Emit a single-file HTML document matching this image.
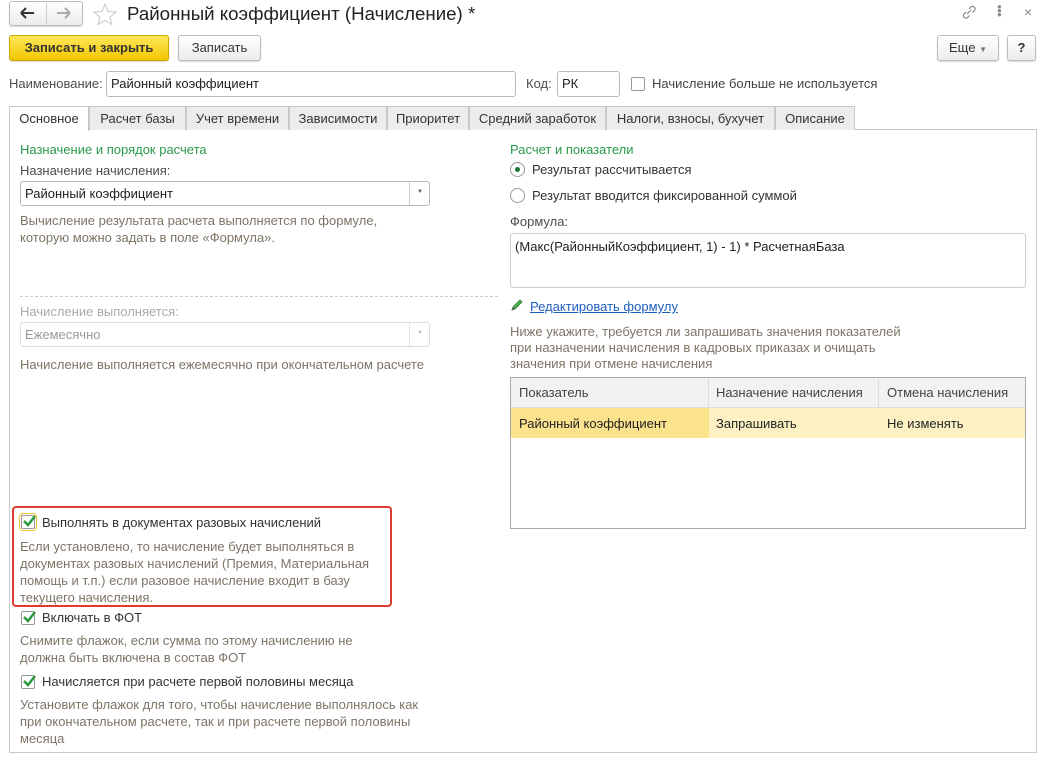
<!DOCTYPE html>
<html><head><meta charset="utf-8"><style>
*{box-sizing:border-box}
body{margin:0;width:1053px;height:759px;background:#fff;font-family:"Liberation Sans",Arial,sans-serif;font-size:13px;color:#333;position:relative;overflow:hidden}
.a{position:absolute;white-space:nowrap}
.btn{position:absolute;border:1px solid #bbb;border-radius:3px;background:linear-gradient(#fff,#ececec);box-shadow:0 1px 1px rgba(0,0,0,.15);text-align:center;color:#333}
.inp{position:absolute;border:1px solid #b8b8b8;border-radius:3px;background:#fff;padding-left:4px}
.tab{position:absolute;top:106px;height:24px;border:1px solid #c8c8c8;border-bottom:none;background:#ececec;text-align:center;line-height:23px;color:#333}
.hint{color:#7d7466}
.green{color:#2a9a4a}
.cb{position:absolute;width:14px;height:14px;border:1px solid #999;border-radius:2px;background:#fff}
.cb svg{position:absolute;left:0;top:-2px}
</style></head><body>
<div class="btn" style="left:9px;top:1px;width:74px;height:25px;border-radius:3px"></div>
<div class="a" style="left:46px;top:3px;width:1px;height:21px;background:#ccc"></div>
<svg class="a" style="left:20px;top:7px" width="16" height="12"><path d="M1 6H14M1 6L6 1M1 6L6 11" stroke="#333" stroke-width="2" fill="none"/></svg>
<svg class="a" style="left:56px;top:7px" width="16" height="12"><path d="M1 6H14M14 6L9 1M14 6L9 11" stroke="#aaa" stroke-width="2" fill="none"/></svg>
<svg class="a" style="left:93px;top:3px" width="24" height="22"><path d="M12 1L15 8.5L23 9L17 14L19 21.5L12 17.5L5 21.5L7 14L1 9L9 8.5Z" fill="none" stroke="#c8c8c8" stroke-width="1"/></svg>
<div class="a" style="left:127px;top:3px;font-size:18.7px;color:#222">Районный коэффициент (Начисление) *</div>
<svg class="a" style="left:961px;top:4px" width="16" height="16"><path d="M6 10L10 6M5 8L3 10a2.5 2.5 0 0 0 3.5 3.5L8.5 11.5M8 5L10 3a2.5 2.5 0 0 1 3.5 3.5L11.5 8.5" stroke="#888" stroke-width="1.2" fill="none"/></svg>
<div class="a" style="left:997px;top:5px;width:3px;line-height:4px;color:#888;font-size:8px">●<br>●<br>●</div>
<div class="a" style="left:1024px;top:4px;color:#888;font-size:14px">×</div>
<div class="btn" style="left:9px;top:35px;width:160px;height:26px;background:linear-gradient(#ffe75a,#f2c600);border-color:#c9a800;font-weight:bold;line-height:24px">Записать и закрыть</div>
<div class="btn" style="left:178px;top:35px;width:83px;height:26px;line-height:24px">Записать</div>
<div class="btn" style="left:937px;top:35px;width:62px;height:26px;line-height:24px">Еще <span style="font-size:8px;color:#777">▼</span></div>
<div class="btn" style="left:1007px;top:35px;width:29px;height:26px;line-height:24px;font-weight:bold">?</div>
<div class="a" style="left:9px;top:76px;color:#4d4d4d">Наименование:</div>
<div class="inp" style="left:106px;top:71px;width:410px;height:26px;line-height:24px;color:#222">Районный коэффициент</div>
<div class="a" style="left:526px;top:76px;color:#4d4d4d">Код:</div>
<div class="inp" style="left:557px;top:71px;width:63px;height:26px;line-height:24px;color:#222">РК</div>
<div class="cb" style="left:631px;top:77px"></div>
<div class="a" style="left:652px;top:76px;color:#444">Начисление больше не используется</div>
<div class="a" style="left:9px;top:129px;width:1028px;height:624px;border:1px solid #c8c8c8"></div>
<div class="tab" style="left:9px;width:80px;background:#fff;height:25px">Основное</div>
<div class="tab" style="left:89px;width:97px">Расчет базы</div>
<div class="tab" style="left:186px;width:103px">Учет времени</div>
<div class="tab" style="left:289px;width:98px">Зависимости</div>
<div class="tab" style="left:387px;width:82px">Приоритет</div>
<div class="tab" style="left:469px;width:137px">Средний заработок</div>
<div class="tab" style="left:606px;width:169px">Налоги, взносы, бухучет</div>
<div class="tab" style="left:775px;width:80px">Описание</div>
<div class="a green" style="left:20px;top:142px">Назначение и порядок расчета</div>
<div class="a" style="left:20px;top:163px;color:#4d4d4d">Назначение начисления:</div>
<div class="inp" style="left:20px;top:181px;width:410px;height:25px;line-height:23px;color:#222">Районный коэффициент</div>
<div class="a" style="left:409px;top:182px;width:1px;height:23px;background:#ccc"></div>
<div class="a" style="left:417px;top:189px;font-size:6px;color:#555">▼</div>
<div class="a hint" style="left:20px;top:212px;line-height:17px">Вычисление результата расчета выполняется по формуле,<br>которую можно задать в поле «Формула».</div>
<div class="a" style="left:20px;top:296px;width:478px;border-top:1px dashed #ccc"></div>
<div class="a" style="left:20px;top:304px;color:#aaa">Начисление выполняется:</div>
<div class="inp" style="left:20px;top:322px;width:410px;height:25px;line-height:23px;color:#999;border-color:#ddd">Ежемесячно</div>
<div class="a" style="left:409px;top:323px;width:1px;height:23px;background:#e4e4e4"></div>
<div class="a" style="left:417px;top:330px;font-size:6px;color:#bbb">▼</div>
<div class="a hint" style="left:20px;top:357px">Начисление выполняется ежемесячно при окончательном расчете</div>
<div class="a" style="left:12px;top:506px;width:380px;height:101px;border:2px solid #e03a30;border-radius:4px"></div>
<div class="cb" style="left:21px;top:515px;outline:1px solid #f0c030;outline-offset:1px"><svg width="14" height="14"><path d="M2 7L6 11L13 2" stroke="#2a9a3a" stroke-width="2.5" fill="none"/></svg></div>
<div class="a" style="left:42px;top:515px;color:#333">Выполнять в документах разовых начислений</div>
<div class="a hint" style="left:20px;top:538px;line-height:17px">Если установлено, то начисление будет выполняться в<br>документах разовых начислений (Премия, Материальная<br>помощь и т.п.) если разовое начисление входит в базу<br>текущего начисления.</div>
<div class="cb" style="left:21px;top:611px"><svg width="14" height="14"><path d="M2 7L6 11L13 2" stroke="#2a9a3a" stroke-width="2.5" fill="none"/></svg></div>
<div class="a" style="left:42px;top:610px;color:#333">Включать в ФОТ</div>
<div class="a hint" style="left:20px;top:632px;line-height:17px">Снимите флажок, если сумма по этому начислению не<br>должна быть включена в состав ФОТ</div>
<div class="cb" style="left:21px;top:675px"><svg width="14" height="14"><path d="M2 7L6 11L13 2" stroke="#2a9a3a" stroke-width="2.5" fill="none"/></svg></div>
<div class="a" style="left:42px;top:674px;color:#333">Начисляется при расчете первой половины месяца</div>
<div class="a hint" style="left:20px;top:696px;line-height:17px">Установите флажок для того, чтобы начисление выполнялось как<br>при окончательном расчете, так и при расчете первой половины<br>месяца</div>
<div class="a green" style="left:510px;top:142px">Расчет и показатели</div>
<div class="a" style="left:510px;top:162px;width:15px;height:15px;border:1px solid #999;border-radius:50%"><div style="position:absolute;left:4px;top:4px;width:5px;height:5px;border-radius:50%;background:#1d7a34"></div></div>
<div class="a" style="left:532px;top:162px;color:#333">Результат рассчитывается</div>
<div class="a" style="left:510px;top:188px;width:15px;height:15px;border:1px solid #999;border-radius:50%"></div>
<div class="a" style="left:532px;top:188px;color:#333">Результат вводится фиксированной суммой</div>
<div class="a" style="left:510px;top:214px;color:#4d4d4d">Формула:</div>
<div class="inp" style="left:510px;top:233px;width:516px;height:55px;padding-top:5px;color:#222;border-color:#ccc">(Макс(РайонныйКоэффициент, 1) - 1) * РасчетнаяБаза</div>
<svg class="a" style="left:510px;top:298px" width="14" height="14"><path d="M2 12L3 9L10 2L12 4L5 11Z" fill="#4caf50" stroke="#2e7d32" stroke-width="0.8"/><path d="M2 12L3 9L5 11Z" fill="#555"/></svg>
<div class="a" style="left:530px;top:299px;color:#1f5fbf;text-decoration:underline">Редактировать формулу</div>
<div class="a hint" style="left:510px;top:324px;line-height:16px">Ниже укажите, требуется ли запрашивать значения показателей<br>при назначении начисления в кадровых приказах и очищать<br>значения при отмене начисления</div>
<div class="a" style="left:510px;top:377px;width:516px;height:152px;border:1px solid #aaa;background:#fff"></div>
<div class="a" style="left:511px;top:378px;width:514px;height:30px;background:#f2f2f2;border-bottom:1px solid #ddd"></div>
<div class="a" style="left:708px;top:378px;width:1px;height:30px;background:#ddd"></div>
<div class="a" style="left:878px;top:378px;width:1px;height:30px;background:#ddd"></div>
<div class="a" style="left:519px;top:385px;color:#444">Показатель</div>
<div class="a" style="left:716px;top:385px;color:#444">Назначение начисления</div>
<div class="a" style="left:887px;top:385px;color:#444">Отмена начисления</div>
<div class="a" style="left:511px;top:408px;width:514px;height:30px;background:#fdf1c4"></div>
<div class="a" style="left:511px;top:408px;width:198px;height:30px;background:#fbe28c"></div>
<div class="a" style="left:519px;top:416px;color:#222">Районный коэффициент</div>
<div class="a" style="left:716px;top:416px;color:#222">Запрашивать</div>
<div class="a" style="left:887px;top:416px;color:#222">Не изменять</div>
</body></html>
